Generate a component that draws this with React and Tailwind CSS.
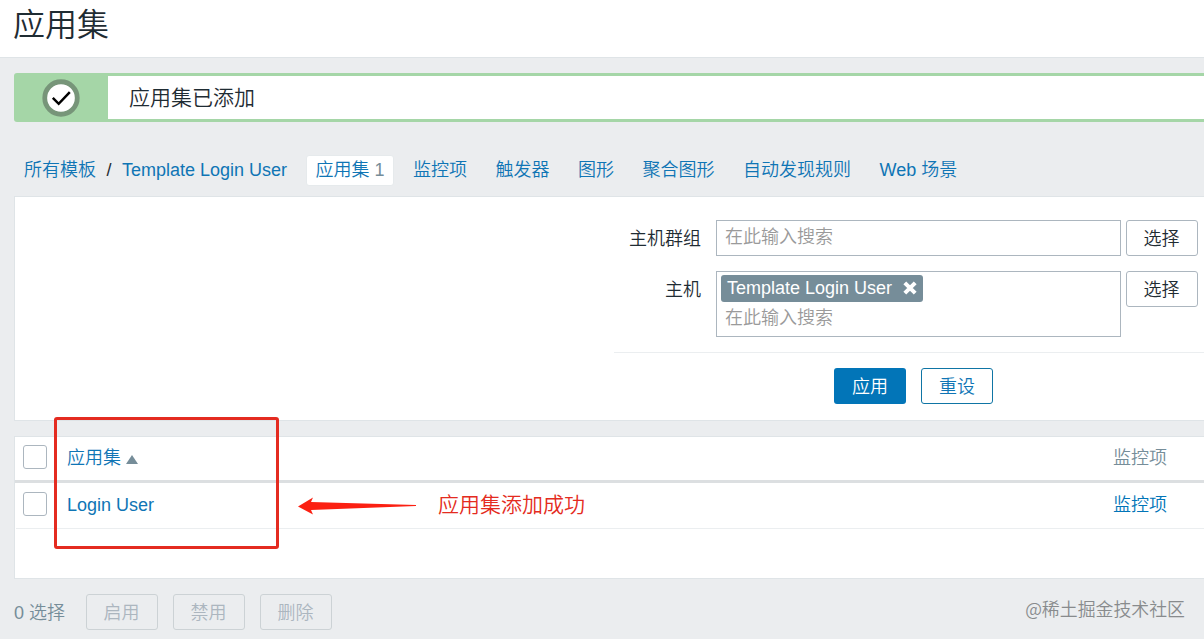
const navItems = ['监控项', '触发器', '图形', '聚合图形', '自动发现规则', 'Web 场景']

const bulkActions = ['启用', '禁用', '删除']

function SelectButton() {
  return (
    <button
      className="flex h-9 w-[72px] items-center justify-center rounded-[3px] border border-[#acb6bf] bg-white pt-0.5 pr-px text-[#1f2c33]"
      type="button"
    >
      选择
    </button>
  )
}

function Checkbox() {
  return <span className="block size-6 rounded-[3px] border border-[#acb6bf] bg-white" />
}

function MessageBar() {
  return (
    <div className="mt-[15px] ml-3.5 flex h-[49px] rounded-l-[3px] bg-[#a5d6a7]">
      <div className="flex w-[94px] items-center justify-center">
        <svg className="size-[38px]" viewBox="0 0 38 38">
          <circle cx="19" cy="19" fill="#fff" r="16.25" stroke="#779579" strokeWidth="4.8" />
          <path d="M10.8 18.8l5.9 6L27.8 13.2" fill="none" stroke="#000" strokeWidth="2.5" />
        </svg>
      </div>
      <div className="my-[3px] flex flex-1 items-center bg-white pl-[21px] text-[21px] text-[#1f2c33]">
        应用集已添加
      </div>
    </div>
  )
}

function Navigation() {
  return (
    <nav className="mt-[33px] flex h-[31px] items-center pl-6 text-[#0f75b5]">
      <a className="pb-0.5">所有模板</a>
      <span className="w-[26px] pb-0.5 text-center text-[#1f2c33]">/</span>
      <a className="w-[184px] pb-0.5">Template Login User</a>
      <span className="flex h-[31px] w-[88px] items-center justify-center rounded-[3px] border border-[#e6eaec] bg-white pb-0.5">
        应用集<span className="ml-[5px] text-[#768d99]">1</span>
      </span>
      <div className="ml-[19px] flex gap-[28.5px] pb-0.5">
        {navItems.map((item) => (
          <a key={item}>{item}</a>
        ))}
      </div>
    </nav>
  )
}

function Filter() {
  return (
    <section className="mt-2.5 ml-3.5 h-[225px] border border-r-0 border-[#dfe4e7] bg-white pt-[23px]">
      <div className="flex h-9 items-start">
        <label className="w-[687px] pr-px text-right leading-[38px] text-[#1f2c33]">主机群组</label>
        <div className="ml-3.5 h-9 w-[405px] border border-[#acb6bf] pl-2 leading-8 text-[#9a9a9a]">
          在此输入搜索
        </div>
        <div className="ml-[5px]">
          <SelectButton />
        </div>
      </div>

      <div className="mt-[15px] flex items-start">
        <label className="w-[687px] pr-px text-right leading-[38px] text-[#1f2c33]">主机</label>
        <div className="ml-3.5 h-[66px] w-[405px] border border-[#acb6bf] pt-[3px] pl-1">
          <span className="flex h-[27px] w-[202px] items-center rounded-[3px] bg-[#768d99] pb-0.5 pl-1.5 text-white">
            Template Login User
            <svg className="ml-[11px] size-3.5" viewBox="0 0 14 14">
              <path d="M1.8 1.8l10.4 10.4M12.2 1.8L1.8 12.2" stroke="#fff" strokeWidth="4" />
            </svg>
          </span>
          <div className="pl-1 leading-8 text-[#9a9a9a]">在此输入搜索</div>
        </div>
        <div className="ml-[5px]">
          <SelectButton />
        </div>
      </div>

      <div className="mt-[15px] ml-[599px] flex gap-[15px] border-t border-[#ebeef0] pt-[15px] pl-[220px]">
        <button
          className="flex h-9 w-[72px] items-center justify-center rounded-[3px] bg-[#0275b8] pt-0.5 text-white"
          type="button"
        >
          应用
        </button>
        <button
          className="flex h-9 w-[72px] items-center justify-center rounded-[3px] border border-[#0f75a5] bg-white pt-0.5 text-[#0f75b5]"
          type="button"
        >
          重设
        </button>
      </div>
    </section>
  )
}

function ApplicationTable() {
  return (
    <section className="mt-[15px] ml-3.5 h-[143px] border border-r-0 border-[#dfe4e7] bg-white">
      <div className="flex h-[46px] items-start border-b-[3px] border-[#dcdfe1] pt-2 pl-2">
        <Checkbox />
        <span className="-mt-px ml-5 text-[#0f75b5]">应用集</span>
        <svg className="mt-2.5 ml-[5px] h-[9px] w-3" viewBox="0 0 12 9">
          <path d="M6 0l6 9H0z" fill="#768d99" />
        </svg>
        <span className="-mt-px mr-[37px] ml-auto text-[#768d99]">监控项</span>
      </div>
      <div className="ml-px flex h-[46px] items-start border-b border-[#ebeef0] pt-[9px] pl-[7px]">
        <Checkbox />
        <span className="-mt-px ml-5 text-[#0f75b5]">Login User</span>
        <span className="-mt-px mr-[37px] ml-auto text-[#0275b8]">监控项</span>
      </div>
    </section>
  )
}

function Footer() {
  return (
    <footer className="mt-[15px] flex h-9 items-center pl-3.5">
      <span className="w-[72px] pt-0.5 text-[#768d99]">0 选择</span>
      <div className="flex gap-[15px]">
        {bulkActions.map((action) => (
          <button
            className="flex h-9 w-[72px] items-center justify-center rounded-[3px] border border-[#ccd2d5] pt-0.5 pr-px text-[#acb6bf]"
            disabled
            key={action}
            type="button"
          >
            {action}
          </button>
        ))}
      </div>
      <span className="mr-[19px] ml-auto pb-2 font-['Noto_Sans_CJK_SC',sans-serif] text-[17.9px] text-[#888b8d]">
        @稀土掘金技术社区
      </span>
    </footer>
  )
}

function Annotation() {
  return (
    <>
      <div className="absolute top-[417px] left-[54px] h-[132px] w-[225px] rounded-[3px] border-3 border-[#e42b20]" />
      <svg className="absolute top-[497px] left-[297px] h-[18px] w-[120px]" viewBox="0 0 120 18">
        <path d="M1 9.5L16 0.5L14 5L119 8V9L14 13L16 17.5Z" fill="#fb2012" />
      </svg>
      <span className="absolute top-[489px] left-[438px] text-[21px] leading-8 text-[#e42b20]">
        应用集添加成功
      </span>
    </>
  )
}

export default function App() {
  return (
    <div className="relative h-[639px] w-[1204px] overflow-hidden bg-[#ebedef] font-['Liberation_Sans','Noto_Sans_CJK_SC',sans-serif] text-[18px] leading-7 font-[350] whitespace-nowrap">
      <header className="h-[58px] border-b border-[#dfe4e7] bg-white pl-[13px]">
        <h1 className="text-[32px] leading-[50px] font-[350] text-[#1f2c33]">应用集</h1>
      </header>
      <MessageBar />
      <Navigation />
      <Filter />
      <ApplicationTable />
      <Footer />
      <Annotation />
    </div>
  )
}
